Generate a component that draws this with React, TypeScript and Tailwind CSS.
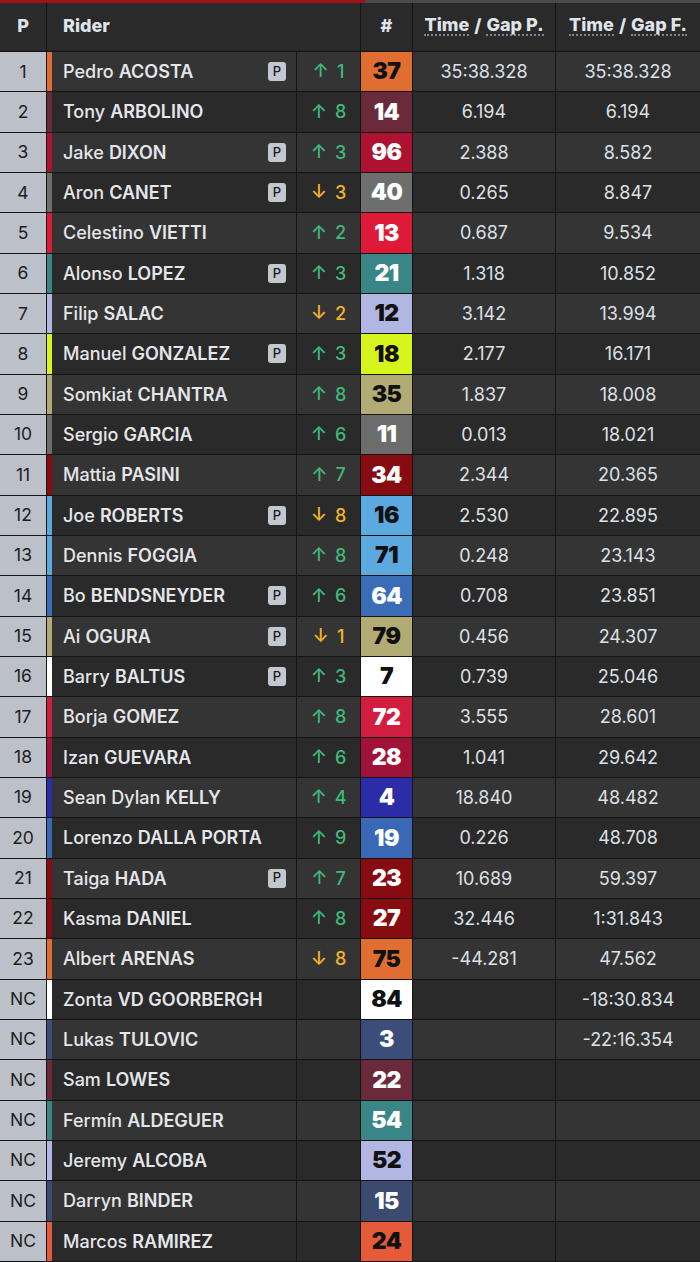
import React from "react";

type Row = {
  pos: string;
  first: string;
  last: string;
  p?: boolean;
  dir?: "up" | "down";
  delta?: number;
  num: string;
  color: string;
  dark?: boolean;
  gapP?: string;
  gapF?: string;
};

const rows: Row[] = [
  { pos: "1", first: "Pedro", last: "ACOSTA", p: true, dir: "up", delta: 1, num: "37", color: "#df6e30", dark: true, gapP: "35:38.328", gapF: "35:38.328" },
  { pos: "2", first: "Tony", last: "ARBOLINO", dir: "up", delta: 8, num: "14", color: "#6b2a3b", gapP: "6.194", gapF: "6.194" },
  { pos: "3", first: "Jake", last: "DIXON", p: true, dir: "up", delta: 3, num: "96", color: "#ad1230", gapP: "2.388", gapF: "8.582" },
  { pos: "4", first: "Aron", last: "CANET", p: true, dir: "down", delta: 3, num: "40", color: "#6e6e6e", gapP: "0.265", gapF: "8.847" },
  { pos: "5", first: "Celestino", last: "VIETTI", dir: "up", delta: 2, num: "13", color: "#df1a38", gapP: "0.687", gapF: "9.534" },
  { pos: "6", first: "Alonso", last: "LOPEZ", p: true, dir: "up", delta: 3, num: "21", color: "#3a8585", gapP: "1.318", gapF: "10.852" },
  { pos: "7", first: "Filip", last: "SALAC", dir: "down", delta: 2, num: "12", color: "#b2b6e2", dark: true, gapP: "3.142", gapF: "13.994" },
  { pos: "8", first: "Manuel", last: "GONZALEZ", p: true, dir: "up", delta: 3, num: "18", color: "#d6f51c", dark: true, gapP: "2.177", gapF: "16.171" },
  { pos: "9", first: "Somkiat", last: "CHANTRA", dir: "up", delta: 8, num: "35", color: "#b3ab76", dark: true, gapP: "1.837", gapF: "18.008" },
  { pos: "10", first: "Sergio", last: "GARCIA", dir: "up", delta: 6, num: "11", color: "#6c6c6c", gapP: "0.013", gapF: "18.021" },
  { pos: "11", first: "Mattia", last: "PASINI", dir: "up", delta: 7, num: "34", color: "#870c12", gapP: "2.344", gapF: "20.365" },
  { pos: "12", first: "Joe", last: "ROBERTS", p: true, dir: "down", delta: 8, num: "16", color: "#5ca9e0", dark: true, gapP: "2.530", gapF: "22.895" },
  { pos: "13", first: "Dennis", last: "FOGGIA", dir: "up", delta: 8, num: "71", color: "#5ca9e0", dark: true, gapP: "0.248", gapF: "23.143" },
  { pos: "14", first: "Bo", last: "BENDSNEYDER", p: true, dir: "up", delta: 6, num: "64", color: "#3a6db6", gapP: "0.708", gapF: "23.851" },
  { pos: "15", first: "Ai", last: "OGURA", p: true, dir: "down", delta: 1, num: "79", color: "#b3ab76", dark: true, gapP: "0.456", gapF: "24.307" },
  { pos: "16", first: "Barry", last: "BALTUS", p: true, dir: "up", delta: 3, num: "7", color: "#ffffff", dark: true, gapP: "0.739", gapF: "25.046" },
  { pos: "17", first: "Borja", last: "GOMEZ", dir: "up", delta: 8, num: "72", color: "#d21e3e", gapP: "3.555", gapF: "28.601" },
  { pos: "18", first: "Izan", last: "GUEVARA", dir: "up", delta: 6, num: "28", color: "#a01238", gapP: "1.041", gapF: "29.642" },
  { pos: "19", first: "Sean Dylan", last: "KELLY", dir: "up", delta: 4, num: "4", color: "#2b2ca6", gapP: "18.840", gapF: "48.482" },
  { pos: "20", first: "Lorenzo", last: "DALLA PORTA", dir: "up", delta: 9, num: "19", color: "#3a68b4", gapP: "0.226", gapF: "48.708" },
  { pos: "21", first: "Taiga", last: "HADA", p: true, dir: "up", delta: 7, num: "23", color: "#870c12", gapP: "10.689", gapF: "59.397" },
  { pos: "22", first: "Kasma", last: "DANIEL", dir: "up", delta: 8, num: "27", color: "#870c12", gapP: "32.446", gapF: "1:31.843" },
  { pos: "23", first: "Albert", last: "ARENAS", dir: "down", delta: 8, num: "75", color: "#df6e30", dark: true, gapP: "-44.281", gapF: "47.562" },
  { pos: "NC", first: "Zonta", last: "VD GOORBERGH", num: "84", color: "#ffffff", dark: true, gapF: "-18:30.834" },
  { pos: "NC", first: "Lukas", last: "TULOVIC", num: "3", color: "#3b4e7a", gapF: "-22:16.354" },
  { pos: "NC", first: "Sam", last: "LOWES", num: "22", color: "#6b2a3b" },
  { pos: "NC", first: "Fermín", last: "ALDEGUER", num: "54", color: "#3a8585" },
  { pos: "NC", first: "Jeremy", last: "ALCOBA", num: "52", color: "#b2b6e2", dark: true },
  { pos: "NC", first: "Darryn", last: "BINDER", num: "15", color: "#3b4a6e" },
  { pos: "NC", first: "Marcos", last: "RAMIREZ", num: "24", color: "#e55b3a", dark: true },
];

const font = { fontFamily: "Inter, 'Noto Sans', sans-serif" } as const;

function Abbr({ children }: { children: React.ReactNode }) {
  return (
    <span className="border-b-2 border-dotted border-[#7d8594] leading-[19px]">{children}</span>
  );
}

export default function App() {
  return (
    <div className="w-[700px] h-[1262px] overflow-hidden bg-[#141414]" style={font}>
      {/* top strip */}
      <div className="flex h-[3px]">
        <div className="w-[365px] bg-[#a0101a]" />
        <div className="flex-1 bg-[#4a4a4a]" />
      </div>
      {/* header */}
      <div className="grid grid-cols-[46px_313px_51px_142px_144px] gap-x-px h-[48px] bg-[#141414] text-[#dfe3ea] font-extrabold text-[18px]">
        <div className="bg-[#2a2a2a] flex items-center justify-center pb-[3px]">P</div>
        <div className="bg-[#2a2a2a] flex items-center pl-[16px] pb-[3px]">Rider</div>
        <div className="bg-[#2a2a2a] flex items-center justify-center pb-[3px]">#</div>
        <div className="bg-[#2a2a2a] flex items-center justify-center gap-[5px] pb-[3px]">
          <Abbr>Time</Abbr>
          <span>/</span>
          <Abbr>Gap P.</Abbr>
        </div>
        <div className="bg-[#2a2a2a] flex items-center justify-center gap-[5px] pb-[3px]">
          <Abbr>Time</Abbr>
          <span>/</span>
          <Abbr>Gap F.</Abbr>
        </div>
      </div>
      <div className="flex flex-col gap-y-px pt-px">
        {rows.map((r, i) => {
          const bg = i % 2 === 0 ? "bg-[#343434]" : "bg-[#2a2a2a]";
          const tone = r.dir === "up" ? "text-[#3fb97a]" : "text-[#f2b52a]";
          return (
            <div
              key={i}
              className="grid grid-cols-[46px_249px_63px_51px_142px_144px] gap-x-px h-[39.33px]"
            >
              <div className="bg-[#bcc0c8] flex items-center justify-center text-[17.5px] text-[#1e1e1e]">
                {r.pos}
              </div>
              <div className={`${bg} flex items-center`}>
                <div className="w-[5px] h-full" style={{ backgroundColor: r.color }} />
                <div className="flex-1 pl-[11px] text-[18px] text-[#e4e6ea] whitespace-nowrap">
                  <span className="font-medium">{r.first}</span>{" "}
                  <span className="font-semibold">{r.last}</span>
                </div>
                {r.p && (
                  <div className="w-[18px] h-[19px] mr-[10px] rounded-[3px] bg-[#c3c7cf] text-[#1a1a1a] text-[13px] font-medium flex items-center justify-center">
                    P
                  </div>
                )}
              </div>
              <div className={`${bg} flex items-center justify-center gap-[8px] text-[18px] font-medium`}>
                {r.dir && (
                  <>
                    <span className={`${tone} text-[19px]`}>{r.dir === "up" ? "↑" : "↓"}</span>
                    <span className={tone}>{r.delta}</span>
                  </>
                )}
              </div>
              <div
                className={`flex items-center justify-center text-[23px] font-black tracking-tight ${r.dark ? "text-[#111]" : "text-white"}`}
                style={{ backgroundColor: r.color }}
              >
                {r.num}
              </div>
              <div className={`${bg} flex items-center justify-center text-[18px] text-[#dde0e6]`}>
                {r.gapP ?? ""}
              </div>
              <div className={`${bg} flex items-center justify-center text-[18px] text-[#dde0e6]`}>
                {r.gapF ?? ""}
              </div>
            </div>
          );
        })}
      </div>
    </div>
  );
}
